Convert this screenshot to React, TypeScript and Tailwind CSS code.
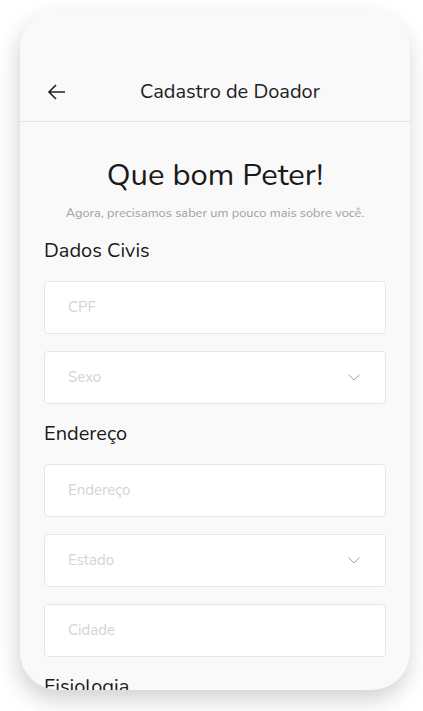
import React from "react";

const font = { fontFamily: "Nunito, Lato, 'Noto Sans', sans-serif" };

function Input({ label, select }: { label: string; select?: boolean }) {
  return (
    <div className="h-[53px] w-full rounded-[4px] border border-[#e6e6e6] bg-white flex items-center pl-[23px] pr-[25px] justify-between">
      <span className="text-[15px] text-[#d4d4d4]">{label}</span>
      {select && (
        <svg width="12" height="7" viewBox="0 0 12 7" fill="none">
          <path d="M0.5 0.5l5.5 5.5 5.5-5.5" stroke="#a0a0a0" strokeWidth="1" />
        </svg>
      )}
    </div>
  );
}

export default function App() {
  return (
    <div className="w-[423px] h-[711px] bg-white pt-[10px] pl-[20px]" style={font}>
      <div className="w-[390px] h-[680px] rounded-[38px] bg-[#f9f9f9] overflow-hidden shadow-[-2px_10px_22px_rgba(0,0,0,0.18)] flex flex-col">
        <div className="pt-[60px] pb-[7px] border-b border-[#e4e4e4]">
          <div className="h-[44px] relative flex items-center justify-center">
            <svg className="absolute left-[27px] top-[13px]" width="19" height="18" viewBox="0 0 19 18" fill="none">
              <path d="M18 9H2M9 2L2 9l7 7" stroke="#222" strokeWidth="1.6" />
            </svg>
            <span className="text-[20px] text-[#222] ml-[30px]">Cadastro de Doador</span>
          </div>
        </div>
        <div className="px-[24px] pt-[33px] flex flex-col">
          <h1 className="text-[31px] leading-[40px] text-[#1a1a1a] text-center">Que bom Peter!</h1>
          <p className="mt-[10px] text-[12.8px] leading-[16px] text-[#a0a0a0] text-center">
            Agora, precisamos saber um pouco mais sobre você.
          </p>
          <h2 className="mt-[17px] text-[20px] leading-[26px] text-[#1a1a1a]">Dados Civis</h2>
          <div className="mt-[17px] flex flex-col gap-[17px]">
            <Input label="CPF" />
            <Input label="Sexo" select />
          </div>
          <h2 className="mt-[17px] text-[20px] leading-[26px] text-[#1a1a1a]">Endereço</h2>
          <div className="mt-[17px] flex flex-col gap-[17px]">
            <Input label="Endereço" />
            <Input label="Estado" select />
            <Input label="Cidade" />
          </div>
          <h2 className="mt-[17px] text-[20px] leading-[26px] text-[#1a1a1a]">Fisiologia</h2>
        </div>
      </div>
    </div>
  );
}
